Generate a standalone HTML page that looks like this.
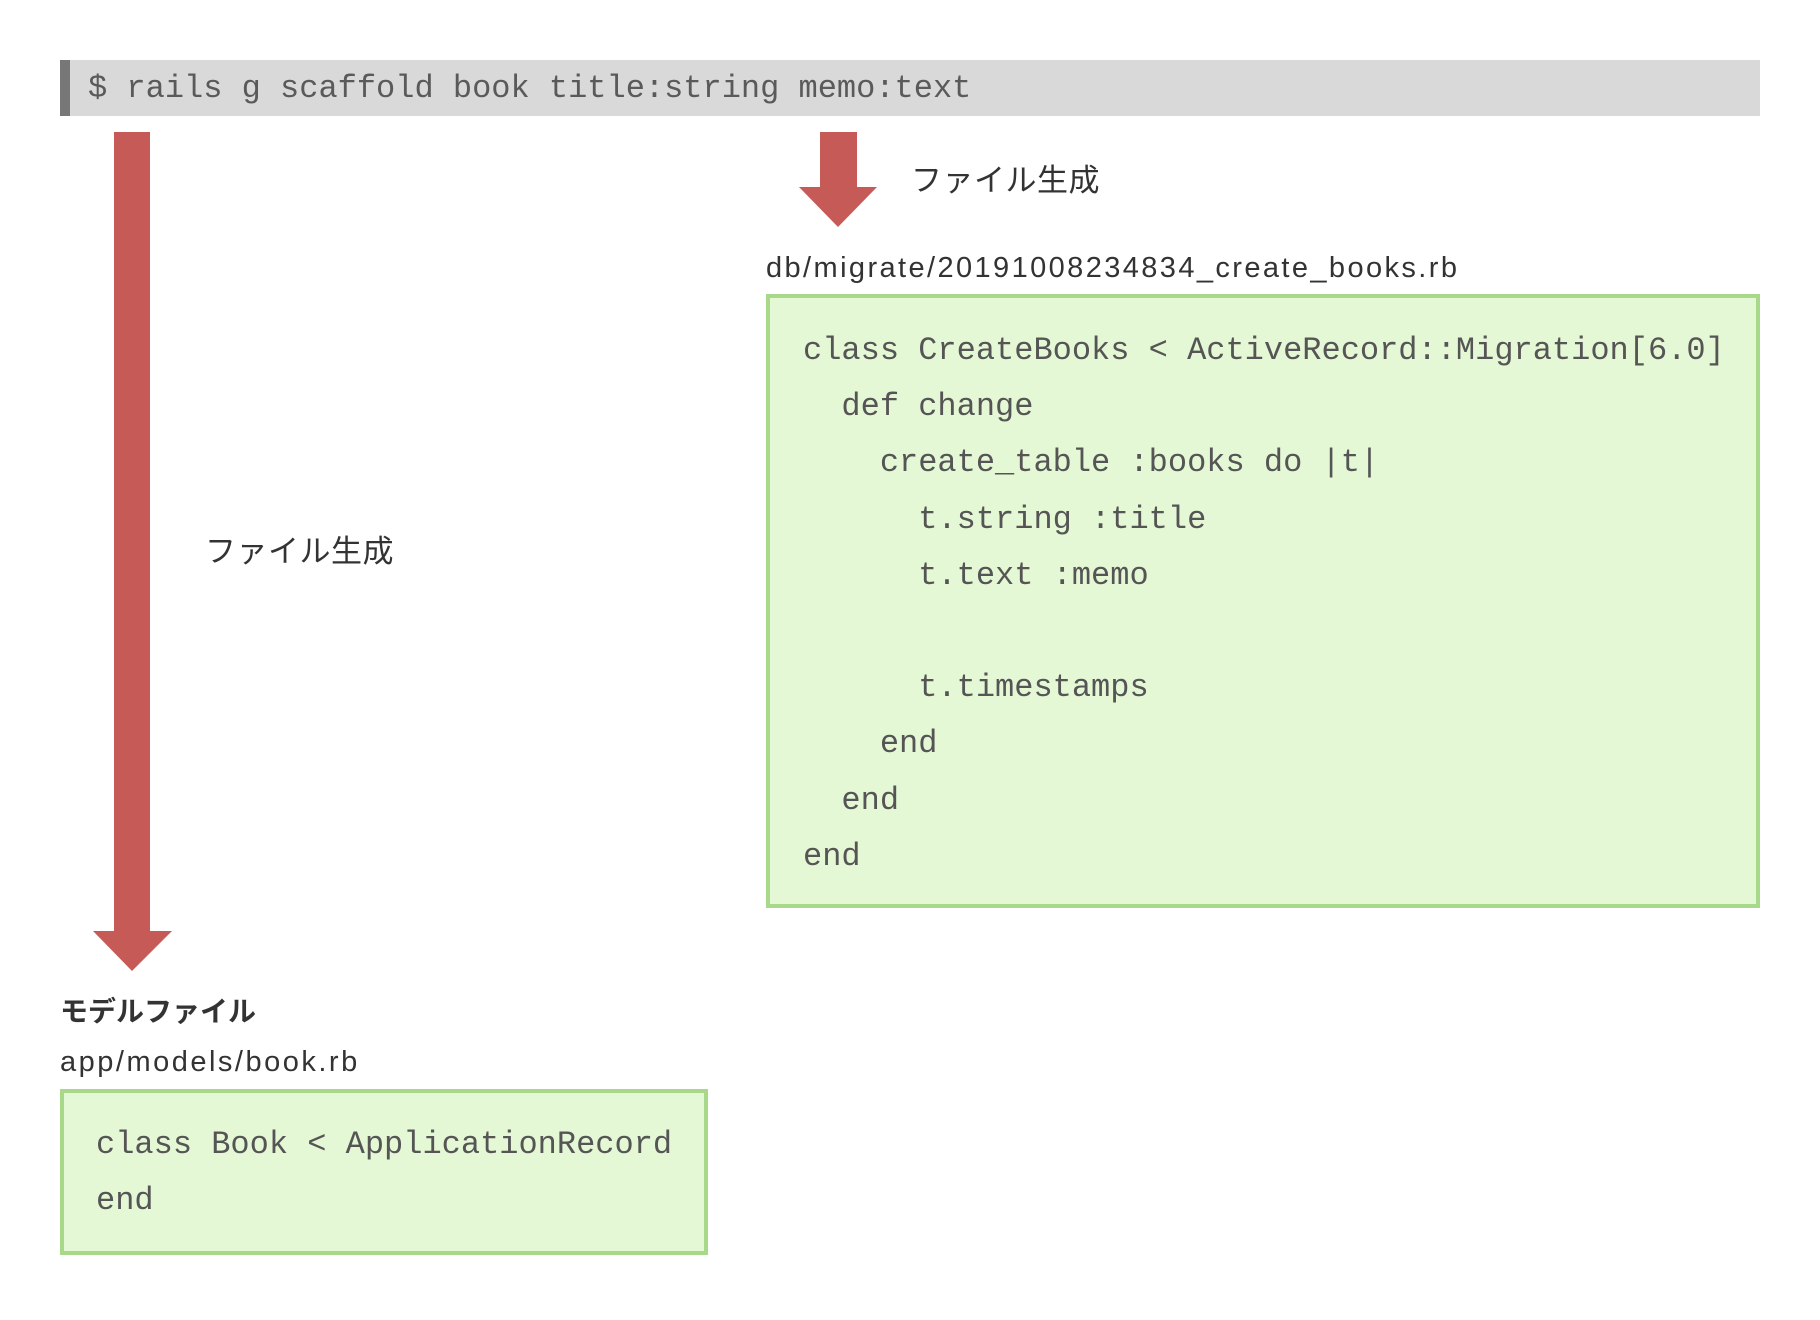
<!DOCTYPE html>
<html><head><meta charset="utf-8"><style>
body{margin:0;width:1820px;height:1320px;background:#fff;position:relative;overflow:hidden;font-family:"Liberation Sans","Noto Sans CJK JP",sans-serif;color:#333}
.a{position:absolute;white-space:pre}
.mono{font-family:"Liberation Mono",monospace;font-size:32px;color:#555}
.box{position:absolute;background:#e5f8d5;border:4px solid #a8d88a;box-sizing:border-box}
</style></head><body>
<div class="a" style="left:60px;top:60px;width:1700px;height:56px;background:#d9d9d9;border-left:10px solid #777;box-sizing:border-box"></div>
<div class="a mono" style="left:88px;top:69px;line-height:40px;color:#5a5a5a">$ rails g scaffold book title:string memo:text</div>

<svg class="a" style="left:0;top:0" width="1820" height="1320">
<rect x="114" y="132" width="36" height="800" fill="#c65a56"/>
<polygon points="93,931 172,931 132,971" fill="#c65a56"/>
<rect x="820" y="132" width="37" height="56" fill="#c65a56"/>
<polygon points="799,187 877,187 838,227" fill="#c65a56"/>
</svg>

<div class="a" style="left:911px;top:161px;font-size:31px;line-height:40px;letter-spacing:0.5px">ファイル生成</div>
<div class="a" style="left:205px;top:532px;font-size:31px;line-height:40px;letter-spacing:0.5px">ファイル生成</div>
<div class="a" style="left:766px;top:249px;font-size:29px;line-height:38px;letter-spacing:2.4px">db/migrate/20191008234834_create_books.rb</div>

<div class="box" style="left:766px;top:294px;width:994px;height:614px"></div>
<div class="a mono" style="left:803px;top:323px;line-height:56.2px">class CreateBooks &lt; ActiveRecord::Migration[6.0]
  def change
    create_table :books do |t|
      t.string :title
      t.text :memo

      t.timestamps
    end
  end
end</div>

<div class="a" style="left:60px;top:992px;font-size:28px;line-height:40px;font-weight:bold">モデルファイル</div>
<div class="a" style="left:60px;top:1043px;font-size:29px;line-height:38px;letter-spacing:2.5px">app/models/book.rb</div>
<div class="box" style="left:60px;top:1089px;width:648px;height:166px"></div>
<div class="a mono" style="left:96px;top:1117px;line-height:56.2px">class Book &lt; ApplicationRecord
end</div>
</body></html>
